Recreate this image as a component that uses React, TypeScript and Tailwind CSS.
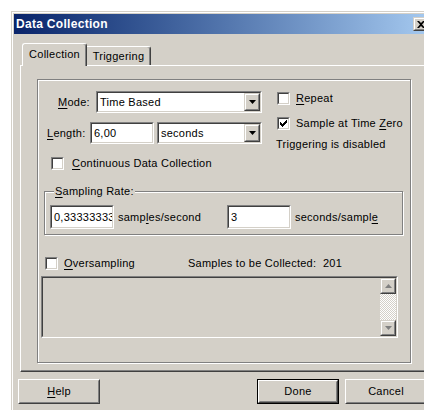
import type { ReactNode } from 'react';

// classic 3D edges
const sunkenOuter = 'border border-t-[#808080] border-l-[#808080] border-b-white border-r-white';
const sunkenInner = 'border border-t-[#404040] border-l-[#404040] border-b-[#d4d0c8] border-r-[#d4d0c8]';
const raisedOuter = 'border border-t-[#d4d0c8] border-l-[#d4d0c8] border-b-[#404040] border-r-[#404040]';
const raisedInner = 'border border-t-white border-l-white border-b-[#808080] border-r-[#808080]';

function Key({ children }: { children: ReactNode }) {
  return <span className="underline underline-offset-[2px]">{children}</span>;
}

function CheckBox({ checked = false }: { checked?: boolean }) {
  return (
    <div className={`w-[13px] h-[13px] shrink-0 ${sunkenOuter}`}>
      <div className={`w-full h-full bg-white flex items-center justify-center ${sunkenInner}`}>
        {checked && (
          <svg width="7" height="7" viewBox="0 0 7 7">
            <path d="M0 2h1v1h1v1h1V3h1V2h1V1h1V0h1v3H6v1H5v1H4v1H3v1H2V6H1V5H0z" fill="#000" />
          </svg>
        )}
      </div>
    </div>
  );
}

function Edit({ value, className }: { value: string; className: string }) {
  return (
    <div className={`${sunkenOuter} ${className}`}>
      <div className={`w-full h-full bg-white flex items-center pl-[2px] overflow-hidden whitespace-nowrap ${sunkenInner}`}>
        {value}
      </div>
    </div>
  );
}

function Arrow({ up = false, color = '#000' }: { up?: boolean; color?: string }) {
  return (
    <svg width="7" height="4" viewBox="0 0 7 4">
      <path d={up ? 'M3.5 0L7 4H0z' : 'M0 0h7L3.5 4z'} fill={color} />
    </svg>
  );
}

function Combo({ value, className }: { value: string; className: string }) {
  return (
    <div className={`${sunkenOuter} ${className}`}>
      <div className={`w-full h-full bg-white flex items-stretch ${sunkenInner}`}>
        <div className="flex-1 flex items-center pl-[2px] whitespace-nowrap overflow-hidden">{value}</div>
        <div className={`w-[16px] ${raisedOuter}`}>
          <div className={`w-full h-full bg-[#d4d0c8] flex items-center justify-center ${raisedInner}`}>
            <Arrow />
          </div>
        </div>
      </div>
    </div>
  );
}

function Button({ children, isDefault = false, className = '' }: { children: ReactNode; isDefault?: boolean; className?: string }) {
  return (
    <div className={`h-[25px] w-[82px] shrink-0 ${isDefault ? 'border border-black' : ''} ${className}`}>
      <div className="w-full h-full border border-t-white border-l-white border-b-[#404040] border-r-[#404040]">
        <div className="w-full h-full flex items-center justify-center border border-t-[#d4d0c8] border-l-[#d4d0c8] border-b-[#808080] border-r-[#808080]">
          {children}
        </div>
      </div>
    </div>
  );
}

function ScrollButton({ up = false }: { up?: boolean }) {
  return (
    <div className={`h-[16px] ${raisedOuter}`}>
      <div className={`w-full h-full bg-[#d4d0c8] flex items-center justify-center ${raisedInner}`}>
        <Arrow up={up} color="#808080" />
      </div>
    </div>
  );
}

export default function App() {
  return (
    <div className="w-[424px] h-[410px] bg-white overflow-hidden font-['Liberation_Sans',Arial,sans-serif] text-[11px] leading-[13px] tracking-[0.25px] text-black">
      {/* dialog window */}
      <div className="ml-[11px] mt-[11px] w-[424px] h-[410px] bg-[#d4d0c8] border border-[#d4d0c8] shadow-[inset_1px_1px_0_#fff] p-[2px]">
        {/* title bar */}
        <div className="h-[20px] w-[417px] flex items-center bg-gradient-to-r from-[#0a246a] to-[#a6caf0] pl-[2px] pr-[2px]">
          <span className="text-white font-bold text-[12px] tracking-[0.3px]">Data Collection</span>
          <div className={`ml-auto h-[14px] w-[16px] ${raisedOuter}`}>
            <div className={`w-full h-full bg-[#d4d0c8] flex items-center justify-center ${raisedInner}`}>
              <svg width="8" height="7" viewBox="0 0 8 7">
                <path d="M0 0h2l2 2 2-2h2L5 3.5 8 7H6L4 5 2 7H0l3-3.5z" fill="#000" />
              </svg>
            </div>
          </div>
        </div>

        <div className="pl-[4px] pt-[9px]">
          {/* tabs */}
          <div className="flex items-end ml-[4px] h-[22px]">
            <div className="relative z-10 h-[23px] w-[65px] -mb-[1px] bg-[#d4d0c8] border-t border-l border-white border-r border-r-[#404040] rounded-t-[3px] shadow-[inset_-1px_0_0_#808080] flex justify-center pt-[4px]">
              Collection
            </div>
            <div className="h-[19px] w-[64px] bg-[#d4d0c8] border-t border-white border-r border-r-[#404040] rounded-tr-[3px] shadow-[inset_-1px_0_0_#808080] flex justify-center pt-[3px]">
              Triggering
            </div>
          </div>

          {/* tab page */}
          <div className="ml-[2px] w-[410px] h-[307px] border-t border-l border-white border-b border-b-[#404040] shadow-[inset_0_-1px_0_#808080]">
            <div className="ml-[16px] mt-[13px] w-[374px] h-[284px] border border-[#808080] shadow-[inset_1px_1px_0_#fff,1px_1px_0_#fff]">
              <div className="flex">
                <div className="w-[239px] pt-[11px]">
                  <div className="flex items-center h-[22px]">
                    <span className="w-[58px] pl-[20px]"><Key>M</Key>ode:</span>
                    <Combo value="Time Based" className="w-[166px] h-[22px]" />
                  </div>
                  <div className="flex items-center h-[22px] mt-[9px]">
                    <span className="w-[52px] pl-[9px]"><Key>L</Key>ength:</span>
                    <Edit value="6,00" className="w-[64px] h-[22px]" />
                    <Combo value="seconds" className="ml-[3px] w-[105px] h-[22px]" />
                  </div>
                  <div className="flex items-center mt-[13px] pl-[13px] gap-[8px]">
                    <CheckBox />
                    <span><Key>C</Key>ontinuous Data Collection</span>
                  </div>
                </div>
                <div className="pt-[12px]">
                  <div className="flex items-center gap-[6px] h-[13px]">
                    <CheckBox />
                    <span><Key>R</Key>epeat</span>
                  </div>
                  <div className="flex items-center gap-[6px] h-[13px] mt-[12px]">
                    <CheckBox checked />
                    <span>Sample at Time <Key>Z</Key>ero</span>
                  </div>
                  <div className="mt-[8px] -ml-[1px]">Triggering is disabled</div>
                </div>
              </div>

              {/* sampling rate group */}
              <div className="relative ml-[6px] mt-[21px] w-[359px] h-[44px] border border-[#808080] shadow-[inset_1px_1px_0_#fff,1px_1px_0_#fff]">
                <span className="absolute -top-[7px] left-[9px] px-[1px] bg-[#d4d0c8]"><Key>S</Key>ampling Rate:</span>
                <div className="flex items-center mt-[13px] ml-[5px]">
                  <Edit value="0,33333333333" className="w-[64px] h-[24px]" />
                  <span className="ml-[4px] w-[109px]">samp<Key>l</Key>es/second</span>
                  <Edit value="3" className="w-[64px] h-[24px]" />
                  <span className="ml-[4px]">seconds/sampl<Key>e</Key></span>
                </div>
              </div>

              <div className="flex items-center mt-[22px] ml-[7px] h-[13px]">
                <div className="flex items-center gap-[6px] w-[143px]">
                  <CheckBox />
                  <span><Key>O</Key>versampling</span>
                </div>
                <span className="whitespace-pre">Samples to be Collected:  201</span>
              </div>

              {/* disabled text area */}
              <div className={`ml-[3px] mt-[6px] w-[357px] h-[62px] ${sunkenOuter}`}>
                <div className={`w-full h-full flex justify-end ${sunkenInner}`}>
                  <div className="w-[16px] flex flex-col">
                    <ScrollButton up />
                    <div className="flex-1 bg-[repeating-conic-gradient(#fff_0_25%,#d4d0c8_0_50%)] bg-[length:2px_2px]" />
                    <ScrollButton />
                  </div>
                </div>
              </div>
            </div>
          </div>

          {/* dialog buttons */}
          <div className="flex mt-[7px]">
            <Button><span><Key>H</Key>elp</span></Button>
            <Button isDefault className="ml-[157px]">Done</Button>
            <Button className="ml-[6px]">Cancel</Button>
          </div>
        </div>
      </div>
    </div>
  );
}
